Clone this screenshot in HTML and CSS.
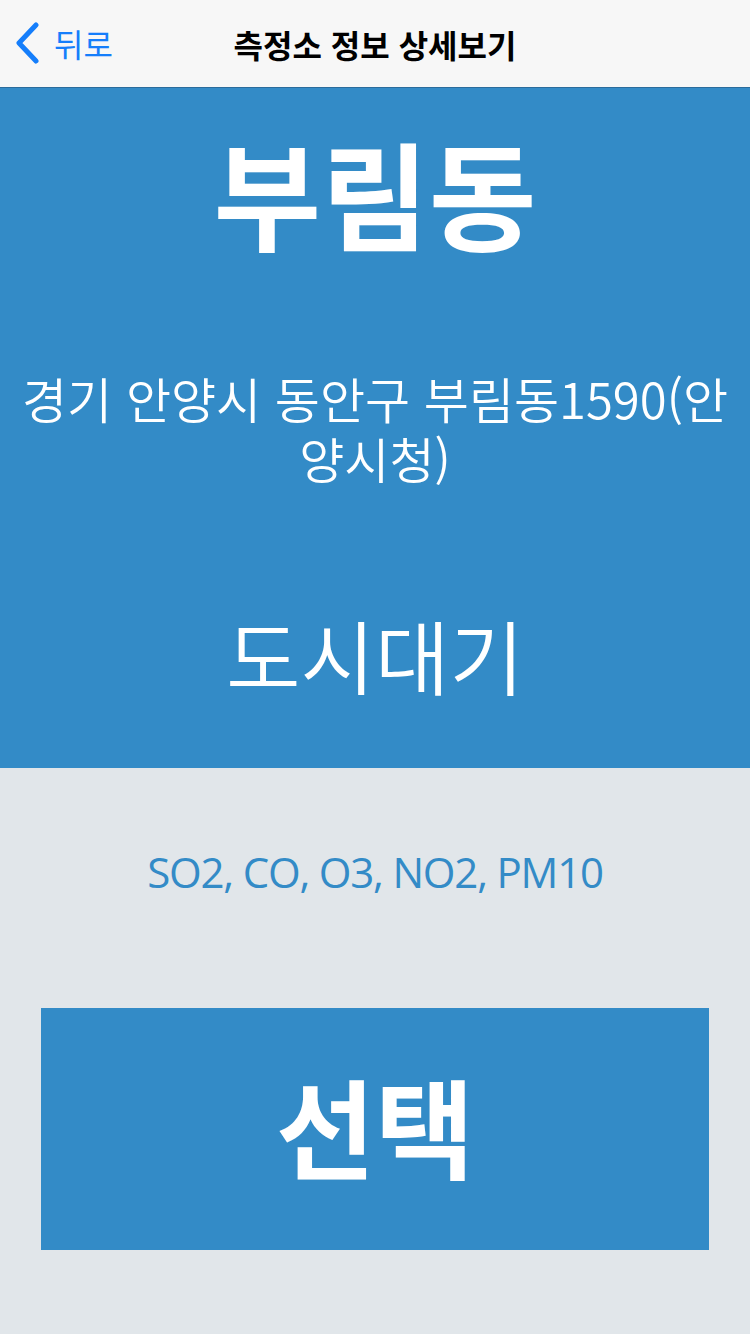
FILE: index.html
```html
<!DOCTYPE html>
<html lang="ko">
<head>
<meta charset="utf-8">
<link rel="stylesheet" href="styles.css">
</head>
<body>
<div class="page">
  <header class="nav">
    <div class="back">
      <svg class="chev" width="26" height="42" viewBox="0 0 26 42"><path d="M22 3 L5 21 L22 39" fill="none" stroke="#157efb" stroke-width="5" stroke-linecap="round" stroke-linejoin="round"/></svg>
      <span class="back-text">뒤로</span>
    </div>
    <div class="title">측정소 정보 상세보기</div>
  </header>
  <section class="hero">
    <div class="name">부림동</div>
    <div class="addr">경기 안양시 동안구 부림동1590(안양시청)</div>
    <div class="type">도시대기</div>
  </section>
  <main class="body">
    <div class="items">SO2, CO, O3, NO2, PM10</div>
    <button class="select">선택</button>
  </main>
</div>
</body>
</html>
```
FILE: styles.css
```css
html, body {
  margin: 0;
  padding: 0;
}
body {
  width: 750px;
  height: 1334px;
  background: #e1e6ea;
  font-family: "Noto Sans CJK KR", "Noto Sans", sans-serif;
  overflow: hidden;
}
.page {
  display: flex;
  flex-direction: column;
  height: 1334px;
}
.nav {
  position: relative;
  height: 87px;
  background: #f7f7f7;
  border-bottom: 1px solid #2b6c9c;
  display: flex;
  align-items: center;
  justify-content: center;
}
.back {
  position: absolute;
  left: 14px;
  top: 22px;
  display: flex;
  align-items: center;
  gap: 14px;
}
.chev {
  display: block;
}
.back-text {
  color: #157efb;
  font-size: 32px;
  line-height: 40px;
}
.title {
  font-size: 32px;
  font-weight: 700;
  color: #000;
  line-height: 40px;
}
.hero {
  height: 680px;
  flex-shrink: 0;
  background: #338bc7;
  color: #fff;
  display: flex;
  flex-direction: column;
  align-items: center;
  text-align: center;
}
.name {
  margin-top: 38px;
  font-size: 117px;
  font-weight: 700;
  line-height: 130px;
}
.addr {
  margin-top: 112px;
  padding: 0 12px;
  font-size: 49px;
  line-height: 60px;
  font-weight: 350;
}
.type {
  margin-top: 116px;
  font-size: 81px;
  line-height: 100px;
  font-weight: 350;
}
.body {
  display: flex;
  flex-direction: column;
  align-items: center;
}
.items {
  margin-top: 76px;
  font-family: "Open Sans", "Noto Sans", sans-serif;
  color: #338bc7;
  font-size: 42px;
  letter-spacing: -1.2px;
  line-height: 56px;
}
.select {
  margin-top: 108px;
  width: 668px;
  height: 242px;
  border: none;
  background: #338bc7;
  color: #fff;
  font-family: "Noto Sans CJK KR", sans-serif;
  font-size: 108px;
  font-weight: 700;
  padding: 0 0 10px;
}
```
